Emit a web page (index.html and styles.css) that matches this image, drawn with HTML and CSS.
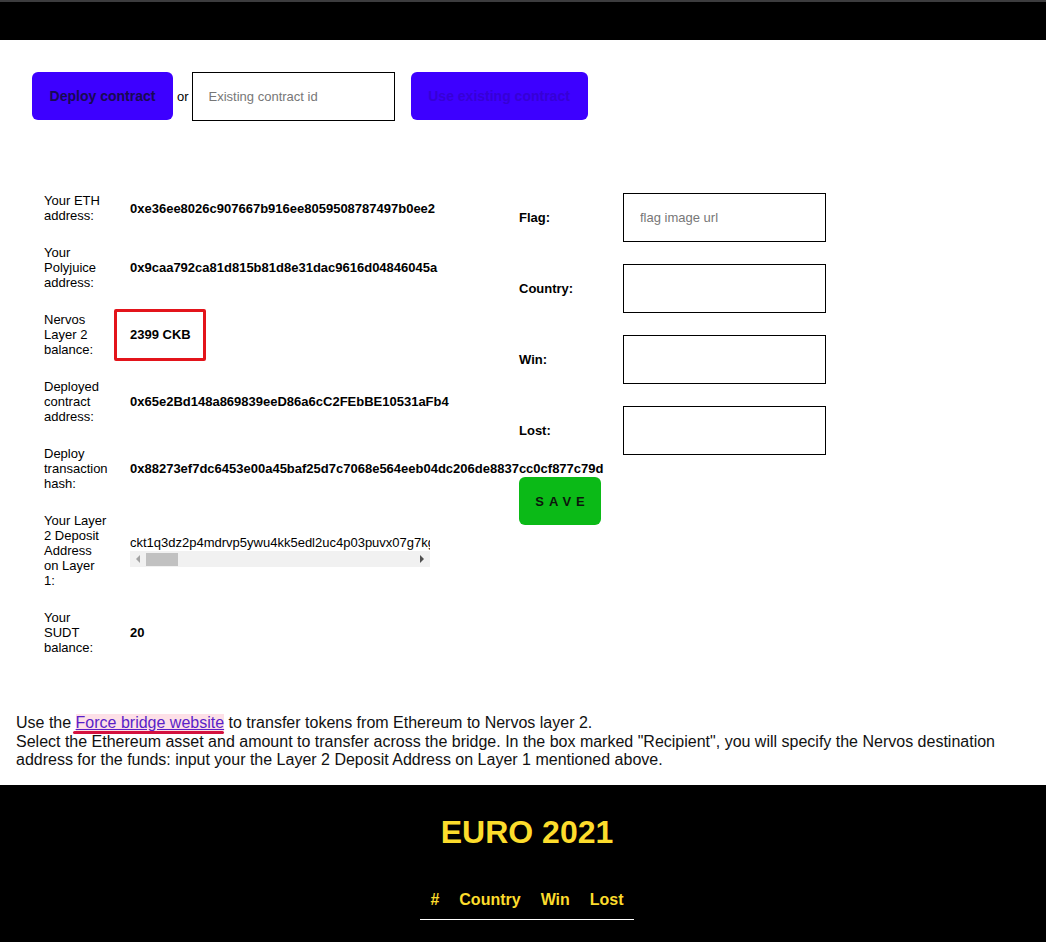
FILE: index.html
```html
<!DOCTYPE html>
<html lang="en">
<head>
<meta charset="utf-8">
<title>EURO 2021</title>
<link rel="stylesheet" href="styles.css">
</head>
<body>
<header class="topbar"></header>
<main class="app">
  <div class="toolbar">
    <button class="btn btn-deploy" type="button">Deploy contract</button>
    <span class="or">or</span>
    <input class="contract-input" type="text" placeholder="Existing contract id">
    <button class="btn btn-use" type="button" disabled>Use existing contract</button>
  </div>

  <div class="content">
    <div class="info">
      <div class="label">Your ETH address:</div>
      <div class="value">0xe36ee8026c907667b916ee8059508787497b0ee2</div>

      <div class="label">Your Polyjuice address:</div>
      <div class="value">0x9caa792ca81d815b81d8e31dac9616d04846045a</div>

      <div class="label">Nervos Layer 2 balance:</div>
      <div class="value"><span class="marked">2399 CKB</span></div>

      <div class="label">Deployed contract address:</div>
      <div class="value">0x65e2Bd148a869839eeD86a6cC2FEbBE10531aFb4</div>

      <div class="label">Deploy transaction hash:</div>
      <div class="value">0x88273ef7dc6453e00a45baf25d7c7068e564eeb04dc206de8837cc0cf877c79d</div>

      <div class="label">Your Layer 2 Deposit Address on Layer 1:</div>
      <div class="value value-plain">
        <div class="scroller">
          <div class="scroll-text">ckt1q3dz2p4mdrvp5ywu4kk5edl2uc4p03puvx07g7kgqqqqqqqqqqqqq5x3vzxq7ftaef9h8kqgmswwkpqru0swu</div>
          <div class="fake-scrollbar">
            <span class="arrow arrow-left"></span>
            <span class="thumb"></span>
            <span class="arrow arrow-right"></span>
          </div>
        </div>
      </div>

      <div class="label">Your SUDT balance:</div>
      <div class="value">20</div>
    </div>

    <form class="team-form">
      <label class="form-label">Flag:</label>
      <input class="field" type="text" placeholder="flag image url">
      <label class="form-label">Country:</label>
      <input class="field" type="text">
      <label class="form-label">Win:</label>
      <input class="field" type="text">
      <label class="form-label">Lost:</label>
      <input class="field" type="text">
      <button class="save" type="button">SAVE</button>
    </form>
  </div>

  <p class="note">Use the <a class="bridge-link" href="#">Force bridge website</a> to transfer tokens from Ethereum to Nervos layer 2.<br>Select the Ethereum asset and amount to transfer across the bridge. In the box marked "Recipient", you will specify the Nervos destination address for the funds: input your the Layer 2 Deposit Address on Layer 1 mentioned above.</p>
</main>

<footer class="standings">
  <h1 class="title">EURO 2021</h1>
  <table class="table">
    <thead>
      <tr><th>#</th><th>Country</th><th>Win</th><th>Lost</th></tr>
    </thead>
  </table>
</footer>
</body>
</html>
```

FILE: styles.css
```css
html, body {
  margin: 0;
  padding: 0;
  background: #fff;
}

body {
  font-family: "Liberation Sans", Arial, sans-serif;
  color: #000;
}

.topbar {
  height: 38px;
  border-top: 2px solid #3c3c3e;
  background: #000;
}

.toolbar {
  display: flex;
  align-items: flex-start;
  padding: 32px 0 0 32px;
}

.btn {
  height: 48px;
  padding: 0;
  border: 0;
  border-radius: 6px;
  background: #3d00ff;
  font-family: "Liberation Sans", Arial, sans-serif;
  font-weight: bold;
  font-size: 14px;
  text-align: center;
}

.btn-deploy {
  width: 141px;
  color: #180a52;
}

.btn-use {
  width: 177px;
  color: #3600d6;
}

.or {
  align-self: center;
  margin: 0 3px 0 4px;
  font-size: 13px;
}

.contract-input {
  box-sizing: border-box;
  width: 203px;
  height: 49px;
  margin-right: 16px;
  padding: 0 16px;
  border: 1px solid #000;
  font-family: "Liberation Sans", Arial, sans-serif;
  font-size: 13px;
  outline: none;
}

.contract-input::placeholder,
.field::placeholder {
  color: #777;
}

.content {
  display: flex;
  align-items: flex-start;
  margin-top: 61px;
  padding-left: 44px;
}

.info {
  display: grid;
  grid-template-columns: 64px 389px;
  column-gap: 22px;
  width: 475px;
  align-items: center;
}

.label {
  padding: 11px 0;
  font-size: 13px;
  line-height: 15px;
}

.value {
  font-size: 13px;
  line-height: 15px;
  font-weight: bold;
  white-space: nowrap;
}

.value-plain {
  font-weight: normal;
}

.marked {
  position: relative;
  display: inline-block;
}

.marked::after {
  content: "";
  position: absolute;
  top: -18px;
  left: -16px;
  right: -15px;
  bottom: -19px;
  border: 3px solid #e3141b;
  border-radius: 2px;
}

.scroller {
  width: 300px;
  padding-top: 1px;
}

.scroll-text {
  overflow: hidden;
  white-space: nowrap;
  line-height: 15px;
}

.fake-scrollbar {
  display: flex;
  align-items: center;
  height: 16px;
  margin-top: 1px;
  background: #f1f1f1;
}

.thumb {
  width: 32px;
  height: 13px;
  background: #c1c1c1;
}

.arrow {
  width: 0;
  height: 0;
  border-top: 4px solid transparent;
  border-bottom: 4px solid transparent;
}

.arrow-left {
  margin: 0 6px 0 6px;
  border-right: 4px solid #a3a3a3;
}

.arrow-right {
  margin: 0 6px 0 auto;
  border-left: 4px solid #505050;
}

.team-form {
  display: grid;
  grid-template-columns: 104px 203px;
  row-gap: 22px;
  align-items: center;
  margin: 11px 0 0;
}

.form-label {
  font-size: 13px;
  font-weight: bold;
}

.field {
  box-sizing: border-box;
  height: 49px;
  padding: 0 16px;
  border: 1px solid #000;
  font-family: "Liberation Sans", Arial, sans-serif;
  font-size: 13px;
  outline: none;
}

.save {
  grid-column: 1;
  width: 82px;
  height: 48px;
  padding: 0 0 0 5px;
  border: 0;
  border-radius: 6px;
  background: #0bba17;
  color: #0c160c;
  font-family: "Liberation Sans", Arial, sans-serif;
  font-weight: bold;
  font-size: 13px;
  letter-spacing: 5px;
}

.note {
  margin: 48px 16px 15px;
  font-size: 16px;
  line-height: 18.5px;
  color: #111;
}

.bridge-link {
  position: relative;
  color: #5a1ec8;
  background: #fde0e7;
}

.bridge-link::after {
  content: "";
  position: absolute;
  left: -3px;
  right: 0;
  bottom: -3px;
  height: 3px;
  border-radius: 2px;
  background: #d4113e;
}

.standings {
  background: #000;
  padding: 8px 0 60px 8px;
  text-align: center;
}

.title {
  margin: 21px 0 30px;
  font-size: 32px;
  line-height: 37px;
  color: #fcdc2c;
}

.table {
  margin: 0 auto;
  border-collapse: collapse;
}

.table th {
  padding: 10px;
  font-size: 16px;
  line-height: 18px;
  color: #fcdc2c;
  border-bottom: 1px solid #fff;
}
```
